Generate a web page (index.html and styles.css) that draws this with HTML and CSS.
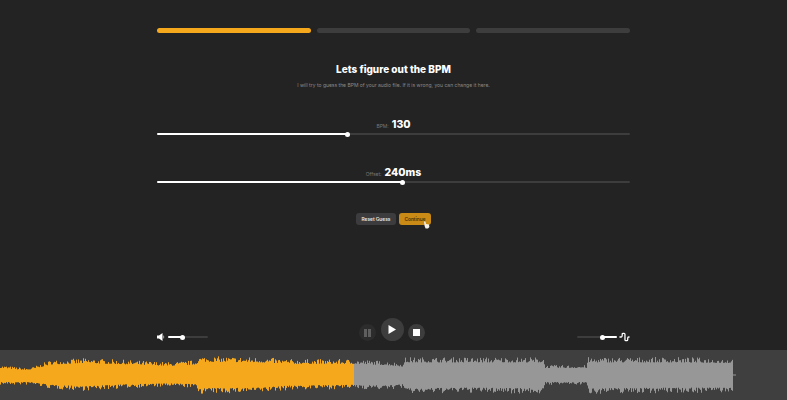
FILE: index.html
```html
<!DOCTYPE html>
<html lang="en">
<head>
  <meta charset="UTF-8" />
  <title>BPM Setup</title>
  <link rel="stylesheet" href="styles.css">
</head>

<body>
  <div class="container">
    <div class="steps">
      <div class="step active"></div>
      <div class="step"></div>
      <div class="step"></div>
    </div>

    <h1>Lets figure out the BPM</h1>
    <p class="subtitle">I will try to guess the BPM of your audio file. If it is wrong, you can change it here.</p>

    <div class="field field-bpm">
      <div class="field-label"><span class="label-name">BPM:</span> <span class="label-value">130</span></div>
      <div class="slider">
        <div class="slider-fill" style="width: 40.2%"></div>
      </div>
    </div>

    <div class="field field-offset">
      <div class="field-label"><span class="label-name">Offset:</span> <span class="label-value">240ms</span></div>
      <div class="slider">
        <div class="slider-fill" style="width: 52%"></div>
      </div>
    </div>

    <div class="actions">
      <button class="btn">Reset Guess</button>
      <button class="btn btn-primary">Continue
        <svg class="cursor" width="7" height="8" viewBox="0 0 7 8"><path d="M1 0.5 L2.4 0.5 L3 3 L6 3.6 L6.4 6 L5 7.6 L2.6 7.6 L1.6 5 Z" fill="#f2f0e8"/></svg>
      </button>
    </div>
  </div>

  <div class="player">
    <div class="side side-left">
      <svg width="9" height="8" viewBox="0 0 9 8"><path d="M0 2.5 H2 L5.5 0 V8 L2 5.5 H0 Z M6.5 2 Q8 4 6.5 6 Z" fill="#fff"/></svg>
      <div class="mini-slider">
        <div class="slider-fill" style="width: 35%"></div>
      </div>
    </div>

    <div class="transport">
      <button class="round pause"><svg width="7" height="8" viewBox="0 0 7 8"><path d="M0 0 H3 V8 H0 Z M4 0 H7 V8 H4 Z" fill="#5f5f5f"/></svg></button>
      <button class="round play"><svg width="8" height="9" viewBox="0 0 8 9"><path d="M0.5 0 L8 4.5 L0.5 9 Z" fill="#fff"/></svg></button>
      <button class="round stop"><span class="stop-icon"></span></button>
    </div>

    <div class="side side-right">
      <div class="mini-slider mini-slider-right">
        <div class="slider-fill" style="width: 35%"></div>
      </div>
      <svg class="wave-icon" width="11" height="10" viewBox="0 0 12 10"><path d="M0.5 5 H2.5 Q3.5 5 3.5 3 V2 Q3.5 1 4.5 1 H5.5 Q6.5 1 6.5 2 V8 Q6.5 9 7.5 9 H8.5 Q9.5 9 9.5 8 V6 Q9.5 5 10.5 5 H11.5" fill="none" stroke="#fff" stroke-width="1.4"/></svg>
    </div>
  </div>

  <canvas id="wave" width="787" height="50"></canvas>

  <script src="waveform.js"></script>
</body>
</html>
```

FILE: styles.css
```css
body {
  font-family: 'Inter', sans-serif;
  background: #232323;
  margin: 0;
  height: 400px;
  overflow: hidden;
  display: flex;
  flex-direction: column;
  color: #fff;
}

.container {
  flex: 1;
  width: 473px;
  margin: 0 auto;
  padding-top: 28px;
  text-align: center;
}

.steps {
  display: flex;
  gap: 6px;
}

.step {
  flex: 1;
  height: 5px;
  border-radius: 3px;
  background: #3d3d3d;
}

.step.active {
  background: #f5a81c;
}

h1 {
  font-size: 10px;
  line-height: 14px;
  font-weight: 800;
  margin: 29px 0 0;
}

.subtitle {
  font-size: 5px;
  line-height: 8px;
  color: #8a8a8a;
  margin: 5px 0 0;
}

.field-bpm {
  margin-top: 28px;
}

.field-offset {
  margin-top: 30px;
}

.field-label {
  line-height: 16px;
  display: flex;
  justify-content: center;
  align-items: baseline;
  gap: 3px;
  height: 14px;
}

.label-name {
  font-size: 5px;
  color: #777;
}

.label-value {
  font-size: 10.5px;
  font-weight: 800;
}

.slider {
  height: 2px;
  border-radius: 1px;
  background: #3d3d3d;
  margin-top: 2px;
}

.slider-fill {
  height: 100%;
  background: #fff;
  border-radius: 1px;
  position: relative;
}

.slider-fill::after {
  content: "";
  position: absolute;
  right: -2.5px;
  top: -1.5px;
  width: 5px;
  height: 5px;
  border-radius: 50%;
  background: #fff;
}

.actions {
  display: flex;
  justify-content: center;
  gap: 3px;
  margin-top: 30px;
}

.btn {
  font-family: inherit;
  font-size: 4.8px;
  font-weight: 600;
  height: 12px;
  padding: 0 5.5px;
  border: none;
  border-radius: 3px;
  background: #3c3c3e;
  color: #e6e6e6;
  position: relative;
}

.btn-primary {
  background: #c98a16;
  color: #4a3206;
}

.cursor {
  position: absolute;
  right: 1px;
  bottom: -4px;
}

.player {
  width: 473px;
  margin: 0 auto 9px;
  display: flex;
  align-items: flex-end;
  justify-content: space-between;
}

.side {
  display: flex;
  align-items: center;
  gap: 2px;
  height: 8px;
}

.side-left {
  width: 70px;
}

.side-right {
  width: 73px;
  justify-content: flex-end;
}

.mini-slider {
  width: 40px;
  height: 2px;
  border-radius: 1px;
  background: #3d3d3d;
}

.mini-slider-right {
  transform: scaleX(-1);
}

.transport {
  display: flex;
  align-items: flex-end;
  gap: 4.5px;
}

.round {
  border: none;
  padding: 0;
  border-radius: 50%;
  display: flex;
  align-items: center;
  justify-content: center;
  background: #3d3d3d;
}

.pause, .stop {
  width: 17px;
  height: 17px;
}

.pause {
  background: #2c2c2c;
}

.play {
  width: 23px;
  height: 23px;
}

.stop-icon {
  width: 7px;
  height: 7px;
  background: #fff;
}

#wave {
  display: block;
  width: 787px;
  height: 50px;
  background: #3f3f3f;
}
```

FILE: waveform.js
```js
// [x, peak above centre, peak below centre]
const envelope = [
  [0, 10, 10], [25, 7, 10], [32, 8, 10], [50, 15, 14], [85, 17, 16],
  [130, 15, 13], [170, 13, 12], [195, 15, 13], [198, 18, 18], [200, 19, 19],
  [260, 18, 18], [290, 16, 15], [354, 16, 14], [387, 14, 15], [403, 12, 13],
  [405, 18, 19], [470, 18, 18], [543, 18, 19], [545, 10, 10], [586, 10, 10],
  [588, 18, 19], [680, 18, 18], [733, 17, 18]
];

let seed = 7;
function rand() {
  seed = (seed * 16807) % 2147483647;
  return seed / 2147483647;
}

function peakAt(x, side) {
  for (let i = 1; i < envelope.length; i++) {
    const a = envelope[i - 1], b = envelope[i];
    if (x <= b[0]) {
      const t = (x - a[0]) / (b[0] - a[0]);
      return a[side] + (b[side] - a[side]) * t;
    }
  }
  return 0;
}

// mostly a solid body, with a thin spike now and then
function spike() {
  return 0.7 + Math.pow(rand(), 2) * 0.3;
}

const ctx = document.getElementById("wave").getContext("2d");
const centre = 25;

for (let x = 0; x < 733; x++) {
  ctx.fillStyle = x < 354 ? "#f5a81c" : "#979797";
  const up = peakAt(x, 1) * spike();
  const down = peakAt(x, 2) * spike();
  ctx.fillRect(x, centre - up, 1, up + down);
}

ctx.fillStyle = "#979797";
ctx.fillRect(733, centre - 0.5, 3, 1);
```
